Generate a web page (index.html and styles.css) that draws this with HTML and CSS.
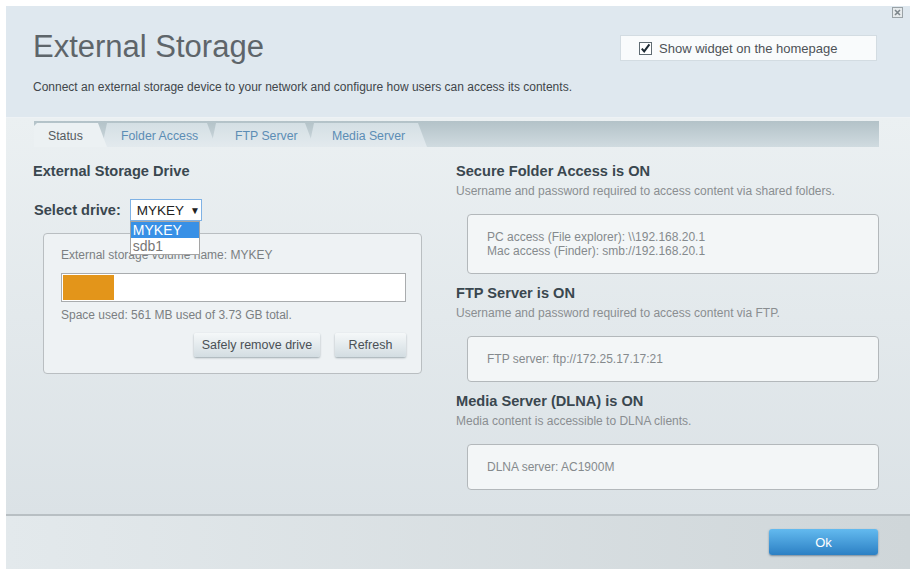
FILE: index.html
```
<html>
  <head>
    <title>External Storage</title>
    <link rel="stylesheet" href="styles.css">
  </head>
  <body>
    <div class="dialog">
      <svg class="close" width="11" height="11" viewBox="0 0 11 11">
        <rect x="0.5" y="0.5" width="10" height="10" fill="#e6eaec" stroke="#9aa2a6" />
        <path d="M3 3 L8 8 M8 3 L3 8" stroke="#7d868b" stroke-width="1.6" />
      </svg>

      <div class="header">
        <div class="header-top">
          <h1>External Storage</h1>
          <label class="widget-toggle">
            <svg class="checkbox" width="13" height="13" viewBox="0 0 13 13">
              <rect x="0.5" y="0.5" width="12" height="12" fill="#fff" stroke="#5f6b72" />
              <path d="M2.8 6.6 L5.2 9.4 L10.4 2.4" fill="none" stroke="#1d2a33" stroke-width="2" />
            </svg>
            Show widget on the homepage
          </label>
        </div>
        <p class="intro">Connect an external storage device to your network and configure how users can access its contents.</p>
      </div>

      <div class="content">
        <div class="tabbar">
          <div class="tab active">Status</div>
          <div class="tab">Folder Access</div>
          <div class="tab">FTP Server</div>
          <div class="tab">Media Server</div>
        </div>

        <div class="columns">
          <div class="col-left">
            <h2>External Storage Drive</h2>
            <div class="select-row">
              <span class="select-label">Select drive:</span>
              <div class="select">
                <div class="select-box">MYKEY <span class="arrow">&#9660;</span></div>
                <ul class="select-list">
                  <li class="selected">MYKEY</li>
                  <li>sdb1</li>
                </ul>
              </div>
            </div>

            <div class="card">
              <div class="card-line">External storage volume name: MYKEY</div>
              <div class="usage-bar"><div class="usage-fill" style="width: 15%"></div></div>
              <div class="card-line">Space used: 561 MB used of 3.73 GB total.</div>
              <div class="card-buttons">
                <button class="btn">Safely remove drive</button>
                <button class="btn">Refresh</button>
              </div>
            </div>
          </div>

          <div class="col-right">
            <h2>Secure Folder Access is ON</h2>
            <p class="sub">Username and password required to access content via shared folders.</p>
            <div class="info-box">
              PC access (File explorer): \\192.168.20.1<br>
              Mac access (Finder): smb://192.168.20.1
            </div>

            <h2>FTP Server is ON</h2>
            <p class="sub">Username and password required to access content via FTP.</p>
            <div class="info-box">FTP server: ftp://172.25.17.17:21</div>

            <h2>Media Server (DLNA) is ON</h2>
            <p class="sub">Media content is accessible to DLNA clients.</p>
            <div class="info-box">DLNA server: AC1900M</div>
          </div>
        </div>
      </div>

      <div class="footer">
        <button class="btn-ok">Ok</button>
      </div>
    </div>
  </body>
</html>
```

FILE: styles.css
```
html,
body {
  margin: 0;
  padding: 0;
  background: #fff;
  font-family: "Liberation Sans", Arial, sans-serif;
}

.dialog {
  position: relative;
  margin: 6px 0 0 6px;
  width: 904px;
  height: 563px;
  display: flex;
  flex-direction: column;
}

.close {
  position: absolute;
  top: 1px;
  right: 7px;
}

.header {
  height: 111px;
  background: #dfe8ef;
  border-bottom: 1px solid #eef2f5;
  padding: 0 0 0 27px;
}

.header-top {
  display: flex;
  justify-content: space-between;
  align-items: flex-start;
  padding-top: 24px;
  padding-right: 33px;
}

h1 {
  margin: 0;
  font-size: 31px;
  font-weight: normal;
  color: #5e656a;
  line-height: 34px;
}

.widget-toggle {
  margin-top: 5px;
  width: 237px;
  height: 24px;
  padding-left: 18px;
  background: #f9fbfc;
  border: 1px solid #d3dce2;
  display: flex;
  align-items: center;
  gap: 7px;
  font-size: 13px;
  color: #4d5257;
}

.intro {
  margin: 16px 0 0 0;
  font-size: 12px;
  line-height: 14px;
  color: #41464a;
}

.content {
  flex: 1 1 auto;
  padding: 3px 31px 0 27px;
  background: linear-gradient(to bottom, #ebf0f2, #dbe2e6);
}

.tabbar {
  margin-left: 1px;
  height: 24px;
  padding-top: 2px;
  display: flex;
  align-items: flex-end;
  background: linear-gradient(to bottom, #b3c2c8, #d0dbe0);
}

.tab {
  height: 24px;
  line-height: 26px;
  font-size: 12.3px;
  color: #5c8db5;
  background: linear-gradient(to bottom, #d4dfe4, #e3eaee);
  clip-path: polygon(0 100%, 5px 0, calc(100% - 9px) 0, 100% 100%);
  margin-left: -5px;
  box-sizing: border-box;
  white-space: nowrap;
}

.tab:nth-child(1) {
  width: 73px;
  margin-left: 0;
  padding-left: 14px;
  clip-path: polygon(0 100%, 0 3px, 3px 0, calc(100% - 9px) 0, 100% 100%);
}

.tab:nth-child(2) {
  width: 114px;
  padding-left: 19px;
}

.tab:nth-child(3) {
  width: 103px;
  padding-left: 24px;
}

.tab:nth-child(4) {
  width: 118px;
  padding-left: 23px;
}

.tab.active {
  color: #555b60;
  background: #ecf1f3;
  position: relative;
  z-index: 1;
}

.columns {
  display: grid;
  grid-template-columns: 389px 423px;
  column-gap: 34px;
  padding-top: 15px;
}

h2 {
  margin: 0;
  font-size: 14.6px;
  line-height: 18px;
  font-weight: bold;
  color: #3a474f;
}

.select-row {
  margin-top: 19px;
  display: flex;
  align-items: center;
  gap: 9px;
}

.select-label {
  font-size: 14.6px;
  font-weight: bold;
  color: #3a474f;
  margin-left: 1px;
}

.select {
  position: relative;
}

.select-box {
  width: 64px;
  height: 20px;
  padding: 0 0 0 6px;
  background: #fff;
  border: 1px solid #7fb2e5;
  display: flex;
  align-items: center;
  white-space: nowrap;
  font-size: 13.5px;
  color: #222;
}

.arrow {
  font-size: 10px;
  margin-left: 6px;
}

.select-list {
  position: absolute;
  top: 22px;
  left: 0;
  z-index: 2;
  width: 68px;
  margin: 0;
  padding: 0;
  list-style: none;
  background: #fff;
  border: 1px solid #a5a5a5;
  font-size: 14px;
  line-height: 16px;
}

.select-list li {
  padding-left: 2px;
  color: #777;
}

.select-list li.selected {
  background: #3890e6;
  color: #fff;
}

.card {
  margin: 12px 0 0 10px;
  padding: 14px 15px 16px 17px;
  background: #eef2f4;
  border: 1px solid #b9bec1;
  border-radius: 4px;
}

.card-line {
  font-size: 12px;
  line-height: 14px;
  color: #7b7f82;
}

.usage-bar {
  margin: 11px 0 6px 0;
  height: 25px;
  background: #fff;
  border: 1px solid #a9acae;
  padding: 1px;
}

.usage-fill {
  height: 100%;
  background: #e3951a;
}

.card-buttons {
  margin-top: 11px;
  display: flex;
  justify-content: flex-end;
  gap: 15px;
}

.btn {
  height: 24px;
  padding: 0;
  white-space: nowrap;
  font-family: "Liberation Sans", Arial, sans-serif;
  font-size: 12.5px;
  color: #4a5055;
  border: none;
  border-radius: 2px;
  background: linear-gradient(to bottom, #f5f8f9, #d3dde2);
  box-shadow: 0 1px 2px rgba(60, 80, 90, 0.45);
}

.btn:first-child {
  width: 126px;
}

.btn:last-child {
  width: 71px;
}

.sub {
  margin: 4px 0 0 0;
  font-size: 12px;
  line-height: 14px;
  color: #8a8e91;
}

.info-box {
  margin: 16px 0 10px 11px;
  padding: 15px 19px;
  background: #f3f6f7;
  border: 1px solid #b3b8bb;
  border-radius: 4px;
  font-size: 12px;
  line-height: 14px;
  color: #858a8d;
}

.footer {
  height: 53px;
  border-top: 2px solid #b8bfc3;
  background: linear-gradient(to right, #e3e9ec, #cfd6d9);
  display: flex;
  justify-content: flex-end;
  align-items: flex-start;
  padding-right: 32px;
}

.btn-ok {
  margin-top: 13px;
  width: 109px;
  height: 26px;
  border: none;
  border-radius: 3px;
  background: linear-gradient(to bottom, #63baef, #2c80c4);
  box-shadow: 0 1px 2px rgba(30, 60, 90, 0.5);
  color: #fff;
  font-family: "Liberation Sans", Arial, sans-serif;
  font-size: 13px;
}
```
